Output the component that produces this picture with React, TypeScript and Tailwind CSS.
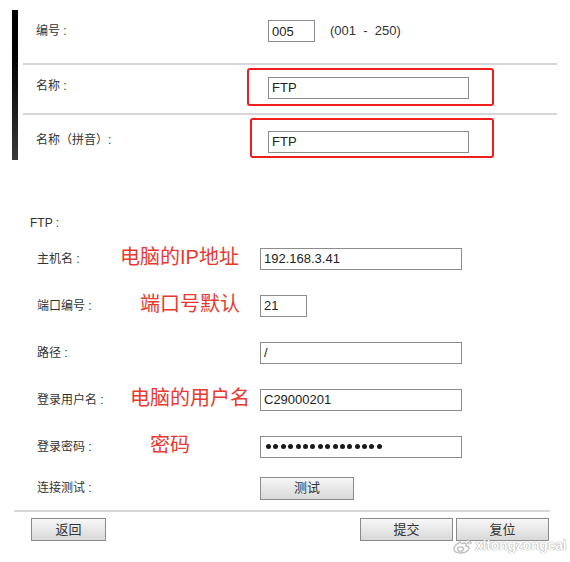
import React from 'react'

const cjk = { fontFamily: '"Liberation Sans", "Noto Sans CJK SC", sans-serif' }

function Field({ value, width = 'w-[202px]' }: { value: string; width?: string }) {
    return (
        <input
            readOnly
            type="text"
            defaultValue={value}
            className={`${width} h-[22px] border border-[#8c8c8c] bg-white px-[3px] text-[13px] text-[#222] outline-none`}
        />
    )
}

function PasswordField({ length }: { length: number }) {
    return (
        <div className="flex h-[22px] w-[202px] items-center gap-[2.4px] border border-[#8c8c8c] bg-white pl-[5px]">
            {Array.from({ length }).map((_, i) => (
                <span key={i} className="h-[5px] w-[5px] rounded-full bg-[#1a1a1a]" />
            ))}
        </div>
    )
}

function GrayButton({ label, width }: { label: string; width: string }) {
    return (
        <button
            className={`${width} h-[23px] border border-[#8a8a8a] bg-gradient-to-b from-[#f7f7f7] to-[#d9d9d9] text-[13px] text-[#333]`}
        >
            {label}
        </button>
    )
}

function FtpRow({ label, note, noteOffset, children }: { label: string; note?: string; noteOffset?: string; children: React.ReactNode }) {
    return (
        <div className="flex h-[47px] items-center pl-[37px]">
            <span className="w-[83px] text-[12px] text-[#333]">{label}</span>
            <div className="w-[140px]">
                {note && <span className={`${noteOffset} text-[20px] leading-none text-[#e8392f]`}>{note}</span>}
            </div>
            {children}
        </div>
    )
}

export default function App() {
    return (
        <div className="relative h-[562px] w-[570px] overflow-hidden bg-white" style={cjk}>
            <div className="ml-[12px] mr-[13px] flex pt-[10px]">
                <div className="h-[150px] w-[6px] bg-gradient-to-b from-black to-[#3a3a3a]" />
                <div className="flex-1 pl-[5px]">
                    <div className="flex h-[53px] items-start pt-[10px]">
                        <span className="w-[245px] pl-[13px] text-[12px] leading-[22px] text-[#333]">编号 :</span>
                        <Field value="005" width="w-[47px]" />
                        <span className="ml-[15px] text-[13px] leading-[22px] text-[#333]">(001&nbsp; -&nbsp; 250)</span>
                    </div>
                    <div className="h-[2px] bg-[#d6d6da]" />
                    <div className="flex h-[48px] items-start pt-[3px]">
                        <span className="w-[224px] pl-[13px] text-[12px] leading-[36px] text-[#333]">名称 :</span>
                        <div className="w-[247px] rounded-[3px] border-2 border-[#f01d1d] py-[5px] pl-[19px]">
                            <Field value="FTP" width="w-[201px]" />
                        </div>
                    </div>
                    <div className="h-[2px] bg-[#d6d6da]" />
                    <div className="flex h-[46px] items-start pt-[3px]">
                        <span className="w-[227px] pl-[13px] text-[12px] leading-[44px] text-[#333]">名称（拼音）:</span>
                        <div className="w-[244px] rounded-[3px] border-2 border-[#f01d1d] pb-[3px] pt-[9px] pl-[16px]">
                            <Field value="FTP" width="w-[201px]" />
                        </div>
                    </div>
                </div>
            </div>

            <div className="mt-[54px] pl-[30px] text-[12px] leading-[16px] text-[#333]">FTP :</div>
            <div className="mt-[4px]">
                <FtpRow label="主机名 :" note="电脑的IP地址" noteOffset="ml-0">
                    <Field value="192.168.3.41" />
                </FtpRow>
                <FtpRow label="端口编号 :" note="端口号默认" noteOffset="ml-[20px]">
                    <Field value="21" width="w-[47px]" />
                </FtpRow>
                <FtpRow label="路径 :">
                    <Field value="/" />
                </FtpRow>
                <FtpRow label="登录用户名 :" note="电脑的用户名" noteOffset="ml-[10px]">
                    <Field value="C29000201" />
                </FtpRow>
                <FtpRow label="登录密码 :" note="密码" noteOffset="ml-[30px]">
                    <PasswordField length={16} />
                </FtpRow>
                <div className="flex h-[36px] items-center pl-[37px]">
                    <span className="w-[223px] text-[12px] text-[#333]">连接测试 :</span>
                    <GrayButton label="测试" width="w-[94px]" />
                </div>
            </div>
            <div className="mx-[14px] mt-[4px] h-[2px] w-[536px] bg-[#d8d8d8]" />
            <div className="mt-[6px] flex pl-[31px] pr-[21px]">
                <GrayButton label="返回" width="w-[75px]" />
                <div className="flex-1" />
                <GrayButton label="提交" width="w-[93px]" />
                <div className="w-[3px]" />
                <GrayButton label="复位" width="w-[93px]" />
            </div>

            <div className="absolute left-[453px] top-[535px] flex items-center gap-[2px]">
                <svg width="20" height="16" viewBox="0 0 20 16" fill="none" stroke="#bdbdbd" strokeWidth="1.3">
                    <path d="M8 4c-4 1-7 4-7 7 0 3 4 4 7 4 4 0 8-2 8-5 0-2-2-2-3-2 1-2 0-3-2-3-1 0-2 0-3 1" />
                    <ellipse cx="7.5" cy="11" rx="3" ry="2.2" />
                    <path d="M14 2c2 0 4 2 4 4" />
                    <path d="M14 4.5c1 0 2 1 2 2" />
                </svg>
                <span
                    className="text-[14px] font-bold tracking-[-0.2px] text-white [text-shadow:0_0_1px_#9a9a9a,0_0_1px_#9a9a9a]"
                    style={{ fontFamily: '"Liberation Sans", sans-serif' }}
                >
                    xitongzongcai
                </span>
            </div>
        </div>
    )
}
